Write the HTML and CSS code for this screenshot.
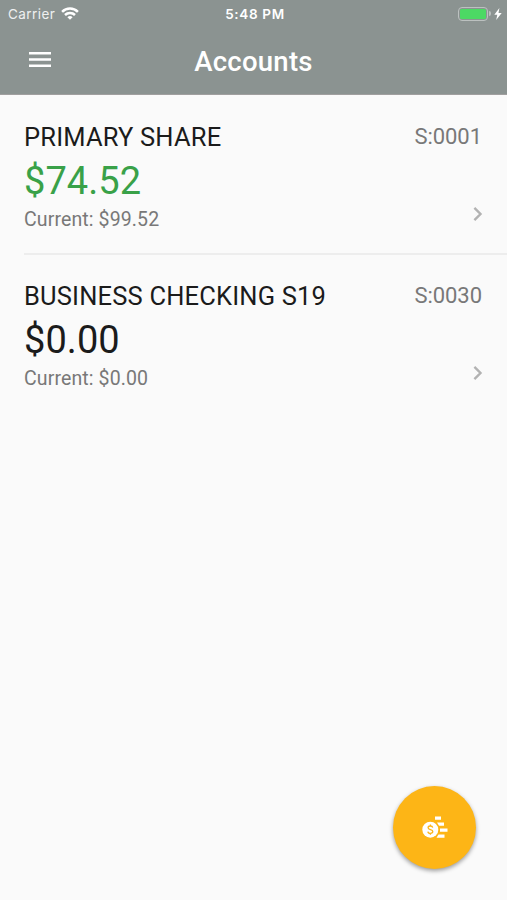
FILE: index.html
```html
<!DOCTYPE html>
<html lang="en">
<head>
<meta charset="utf-8">
<title>Accounts</title>
<link rel="stylesheet" href="styles.css">
</head>
<body>
<div class="app">
  <header class="header">
    <div class="status">
      <div class="status-left">
        <span class="carrier">Carrier</span>
        <svg class="wifi" viewBox="0 0 18 13" width="18" height="13" fill="none" stroke="#fff" stroke-width="2.5">
          <path d="M1.100 4.800a11.200 11.200 0 0 1 15.800 0"/>
          <path d="M4 8a7.100 7.100 0 0 1 10 0"/>
          <path d="M9 12.800 6.400 10.200a3.700 3.700 0 0 1 5.200 0z" fill="#fff" stroke="none"/>
        </svg>
      </div>
      <span class="time">5:48 PM</span>
      <div class="status-right">
        <span class="battery"><span class="charge"></span></span>
        <span class="battery-tip"></span>
        <svg class="bolt" viewBox="0 0 8 12" width="8" height="12"><path d="M5.400 0 .3 6.700h3L2.200 12 7.700 5H4.500z" fill="#fff"/></svg>
      </div>
    </div>
    <div class="toolbar">
      <svg class="menu" viewBox="0 0 22 15" width="22" height="15"><path d="M0 0h22v2.600H0zM0 6.200h22v2.600H0zM0 12.400h22V15H0z" fill="#fff"/></svg>
      <h1 class="heading">Accounts</h1>
    </div>
  </header>
  <main class="accounts">
    <section class="account">
      <div class="info">
        <h2 class="name">PRIMARY SHARE</h2>
        <div class="amount positive">$74.52</div>
        <div class="current">Current: $99.52</div>
      </div>
      <div class="side">
        <span class="number">S:0001</span>
        <svg class="chevron" viewBox="0 0 10 16" width="10" height="16"><path d="M1.400 1.900 7.500 8l-6.100 6.100" fill="none" stroke="#b2b2b2" stroke-width="2.400"/></svg>
      </div>
    </section>
    <section class="account">
      <div class="info">
        <h2 class="name">BUSINESS CHECKING S19</h2>
        <div class="amount">$0.00</div>
        <div class="current">Current: $0.00</div>
      </div>
      <div class="side">
        <span class="number">S:0030</span>
        <svg class="chevron" viewBox="0 0 10 16" width="10" height="16"><path d="M1.400 1.900 7.500 8l-6.100 6.100" fill="none" stroke="#b2b2b2" stroke-width="2.400"/></svg>
      </div>
    </section>
  </main>
  <button class="fab" aria-label="Move money">
    <svg viewBox="0 0 26 24" width="26" height="24">
      <path d="M13 .5h6v3.200h-6zM15 6.500h7v3.200h-5zM18 12.500h7.500v3.200H18zM16.500 18.500h6v3.200h-8z" fill="#fff"/>
      <circle cx="8.300" cy="13.700" r="8" fill="#fff"/>
      <path d="M10.700 11.600c-.2-1.100-1.100-1.600-2.300-1.600-1.400 0-2.300.7-2.300 1.700 0 2.500 4.700 1.300 4.700 3.900 0 1.100-1 1.800-2.400 1.800S6 16.700 5.900 15.600M8.400 8.600v1.500M8.400 17.300v1.500" fill="none" stroke="#fdb516" stroke-width="1.300"/>
    </svg>
  </button>
</div>
</body>
</html>
```
FILE: styles.css
```css
* { box-sizing: border-box; }
body { margin: 0; font-family: Roboto, sans-serif; background: #fafafa; }
.app { position: relative; height: 900px; overflow: hidden; background: #fafafa; }
.header { height: 95px; background: #8b9391; color: #fff; border-bottom: 1px solid #a09f9f; }
.status {
  height: 27px; padding: 0 5px 0 8px;
  display: grid; grid-template-columns: 1fr auto 1fr; align-items: center;
  font-family: Inter, sans-serif; font-size: 13.5px; line-height: 27px;
}
.status-left { display: flex; align-items: center; gap: 6px; }
.carrier { letter-spacing: .45px; color: #eef0f0; padding-top: 1px; }
.wifi { margin-bottom: 2px; }
.time { font-weight: 600; font-size: 13.5px; letter-spacing: .65px; padding-top: 1px; }
.status-right { display: flex; align-items: center; justify-content: flex-end; margin-bottom: 1px; }
.battery { width: 30px; height: 14px; padding: 1px; border: 1px solid #bcc1c0; border-radius: 4px; display: flex; }
.charge { flex: 1; background: #4cd964; border-radius: 1.5px; }
.battery-tip { width: 2px; height: 5px; margin: 0 3px 0 1px; background: #bcc1c0; border-radius: 0 2px 2px 0; }
.toolbar {
  height: 67px; padding: 0 29px;
  display: grid; grid-template-columns: 22px 1fr 22px; align-items: center;
}
.menu { margin-bottom: 2px; }
.heading { margin: 2px 0 0; text-align: center; font-size: 27.5px; line-height: 32px; font-weight: 500; letter-spacing: .25px; }
.account {
  height: 158px; margin-left: 24px; padding: 26px 25px 0 0;
  display: flex; justify-content: space-between;
}
.account + .account { height: 160px; padding-top: 25px; border-top: 2px solid #ededed; }
.name { margin: 0; font-size: 25.5px; line-height: 32px; font-weight: 400; letter-spacing: .18px; color: #1b1b1b; white-space: nowrap; }
.amount { font-size: 38px; line-height: 44px; margin-top: 6px; letter-spacing: .05px; color: #1b1b1b; }
.positive { color: #39a148; }
.current { font-size: 19.5px; line-height: 24px; margin-top: 5px; letter-spacing: .12px; color: #787878; }
.side { display: flex; flex-direction: column; align-items: flex-end; }
.number { font-size: 22px; line-height: 32px; letter-spacing: -.05px; color: #787878; }
.chevron { margin-top: 53px; margin-right: -1px; }
.fab {
  position: absolute; left: 393px; top: 786px; width: 83px; height: 83px;
  display: flex; align-items: center; justify-content: center;
  padding: 0; border: 0; border-radius: 50%; background: #fdb516;
  box-shadow: 0 2px 4px rgba(0,0,0,.38);
}
```
